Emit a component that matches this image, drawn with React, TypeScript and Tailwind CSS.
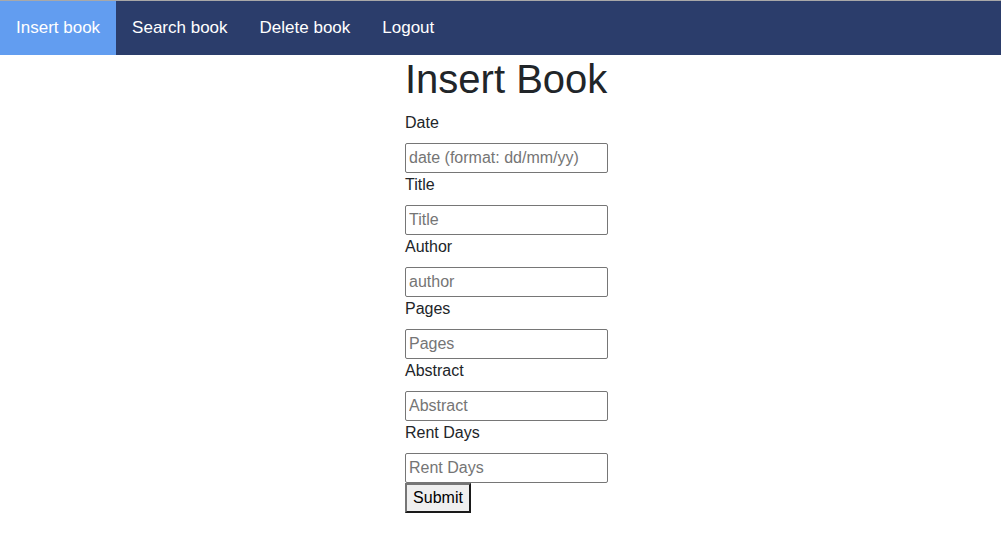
const links = ["Insert book", "Search book", "Delete book", "Logout"];
const fields = [
  { label: "Date", placeholder: "date (format: dd/mm/yy)" },
  { label: "Title", placeholder: "Title" },
  { label: "Author", placeholder: "author" },
  { label: "Pages", placeholder: "Pages" },
  { label: "Abstract", placeholder: "Abstract" },
  { label: "Rent Days", placeholder: "Rent Days" },
];

export default function App() {
  return (
    <div className="min-h-screen bg-white border-t border-[#a8a8a8] font-['Liberation_Sans',Arial,sans-serif] text-[#212529]">
      <nav className="flex h-[54px] bg-[#2b3d6b]">
        {links.map((link, i) => (
          <a
            key={link}
            href="#"
            className={`flex items-center px-4 text-[17px] text-white ${
              i === 0 ? "bg-[#629df0]" : ""
            }`}
          >
            {link}
          </a>
        ))}
      </nav>

      <form className="ml-[405px] flex w-[203px] flex-col">
        <h1 className="mb-2 text-[40px] leading-[48px] whitespace-nowrap">Insert Book</h1>
        {fields.map((f) => (
          <div key={f.label} className="flex flex-col">
            <label className="mb-2 text-base leading-6">{f.label}</label>
            <input
              placeholder={f.placeholder}
              className="h-[30px] w-[203px] rounded-[2px] border border-[#767676] px-[3px] text-base placeholder:text-[#757575] focus:outline-none"
            />
          </div>
        ))}
        <div>
          <button
            type="button"
            className="h-[30px] w-[66px] border-2 border-t-[#767676] border-l-[#767676] border-r-[#1a1a1a] border-b-[#1a1a1a] bg-[#efefef] text-base text-black"
          >
            Submit
          </button>
        </div>
      </form>
    </div>
  );
}
